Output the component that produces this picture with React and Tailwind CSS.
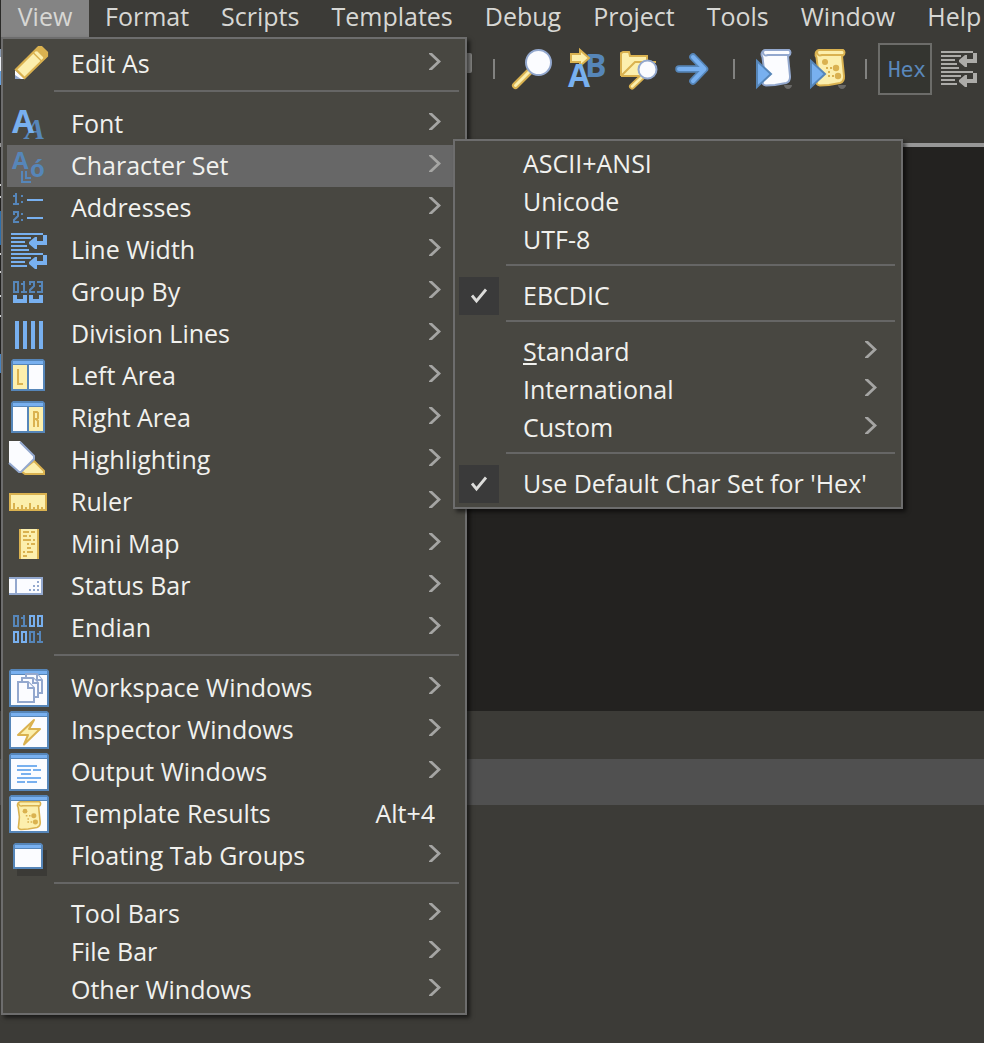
import React from "react";

const BRIGHT = "#78b0ef";
const DEEP = "#5686b9";
const CREAM = "#fcefad";
const GOLD = "#dab250";
const STEEL = "#93a8ce";
const PAPER = "#fbfcff";

const DIGITS = {
  0: "M1 1h4v10h-4z",
  1: "M0 3h3 M3 0v11 M0 11h6",
  2: "M1 4V1h4v4l-4 4v2h5",
  3: "M0 1h5v4h-3 M5 5v6h-5",
};

function Digits({ text, x, y, color }) {
  return text.split("").map((d, i) => (
    <path
      key={i}
      d={DIGITS[d]}
      transform={`translate(${x + i * 8} ${y})`}
      fill="none"
      stroke={color}
      strokeWidth="2"
    />
  ));
}

function Icon({ children }) {
  return (
    <svg width="44" height="42" viewBox="0 0 44 42" className="overflow-visible" aria-hidden="true">
      {children}
    </svg>
  );
}

function Letter({ x, y, size, fill, className = "", children }) {
  return (
    <text x={x} y={y} fontSize={size} fill={fill} fontWeight="700" className={className || "font-['Open_Sans',sans-serif]"}>
      {children}
    </text>
  );
}

function PencilIcon() {
  return (
    <Icon>
      <path d="M8 27v9h10z" fill={PAPER} />
      <path d="M8 32v4h6z" fill={STEEL} />
      <path d="M9 26.500 31.500 4h3l5.500 5.500v3.500L17.500 35z" fill={CREAM} stroke={GOLD} strokeWidth="2.200" />
      <path d="M31.500 4h3l5.500 5.500v3.500l-3 2.500-9-8.500z" fill={GOLD} />
      <path d="m29.500 9 6 6" stroke={CREAM} strokeWidth="2" />
      <path d="m26 9.500 8.500 8.500" stroke={GOLD} strokeWidth="1.500" />
    </Icon>
  );
}

function FontIcon() {
  return (
    <Icon>
      <Letter x={18} y={36} size={30} fill={DEEP} className="font-['Liberation_Serif',serif] italic">A</Letter>
      <Letter x={5} y={30} size={32} fill={BRIGHT}>A</Letter>
    </Icon>
  );
}

function CharSetIcon() {
  return (
    <Icon>
      <Letter x={5} y={24} size={24} fill={DEEP}>A</Letter>
      <Letter x={23} y={32} size={24} fill={DEEP}>ó</Letter>
      <path d="M15 26v11h9M19 26v7h5" fill="none" stroke={DEEP} strokeWidth="2" />
    </Icon>
  );
}

function AddressesIcon() {
  return (
    <Icon>
      <Digits text="1" x={6} y={6} color={DEEP} />
      <Digits text="2" x={6} y={24} color={DEEP} />
      <path d="M14 8h2v2h-2zM14 14h2v2h-2zM14 26h2v2h-2zM14 32h2v2h-2z" fill={DEEP} />
      <path d="M20 12h16v2H20zM20 30h16v2H20z" fill={BRIGHT} />
    </Icon>
  );
}

function WrapShape({ color }) {
  return (
    <g fill={color}>
      <path d="M4 4h32v2H4zM4 8h20v2H4zM4 12h14v2H4zM4 16h16v2H4zM4 20h18v2H4zM4 24h32v2H4zM4 28h20v2H4zM4 32h14v2H4zM4 36h16v2H4z" />
      <path d="M36 6h4v10H30v4h-2l-6-5v-2l6-5h2v4h6zM36 26h4v10H30v4h-2l-6-5v-2l6-5h2v4h6z" />
    </g>
  );
}

function LineWidthIcon() {
  return (
    <Icon>
      <WrapShape color={BRIGHT} />
    </Icon>
  );
}

function GroupByIcon() {
  return (
    <Icon>
      <Digits text="0123" x={6} y={10} color={DEEP} />
      <path d="M6 24h4v4h6v-4h4v8H6zM22 24h4v4h6v-4h4v8H22z" fill={BRIGHT} />
    </Icon>
  );
}

function DivisionIcon() {
  return (
    <Icon>
      <path d="M8 8h4v28H8zM16 8h4v28h-4zM24 8h4v28h-4zM32 8h4v28h-4z" fill={BRIGHT} />
    </Icon>
  );
}

function AreaIcon({ side }) {
  const left = side === "left";
  return (
    <Icon>
      <path d="M4 6l2-2h30l2 2v30H4z" fill={DEEP} />
      <path d="M6 6h30v3H6z" fill={BRIGHT} />
      <path d="M6 10h14v24H6z" fill={left ? CREAM : PAPER} />
      <path d="M22 10h14v24H22z" fill={left ? PAPER : CREAM} />
      <path
        d={left ? "M11 14v15h5" : "M27 30V15h3l1 1v5l-1 1h-3M29 22l2 2v6"}
        fill="none"
        stroke={GOLD}
        strokeWidth="2"
      />
    </Icon>
  );
}

function HighlightIcon() {
  return (
    <Icon>
      <path d="M27 22 37 32v3H18l-4-3z" fill={CREAM} stroke={GOLD} strokeWidth="2" />
      <path d="M2 2h11l14 15v3L14 33h-2L2 24z" fill={PAPER} />
      <path d="M13 3l14 14v3L14 33h-2L2 24" fill="none" stroke={STEEL} strokeWidth="2" />
    </Icon>
  );
}

function RulerIcon() {
  return (
    <Icon>
      <path d="M3 13h36v16H3z" fill={CREAM} stroke={GOLD} strokeWidth="2" />
      <path
        d="M6 22h2v6H6zM10 26h2v2h-2zM14 24h2v4h-2zM18 26h2v2h-2zM22 22h2v6h-2zM26 26h2v2h-2zM30 24h2v4h-2zM34 26h2v2h-2z"
        fill={GOLD}
      />
    </Icon>
  );
}

function MiniMapIcon() {
  return (
    <Icon>
      <path d="M12 6h20v30H12z" fill={GOLD} />
      <path d="M14 6h16v30H14z" fill={CREAM} />
      <path
        d="M16 8h6v2h-6zM24 8h4v2h-4zM16 12h4v2h-4zM22 12h2v2h-2zM16 16h8v2h-8zM26 16h2v2h-2zM20 20h2v2h-2zM24 20h4v2h-4zM20 24h4v2h-4zM16 28h2v2h-2zM20 28h6v2h-6zM16 32h4v2h-4z"
        fill={GOLD}
      />
    </Icon>
  );
}

function StatusBarIcon() {
  return (
    <Icon>
      <path d="M2 12h34v18H2z" fill={STEEL} />
      <path d="M2 14h6v14H2zM10 14h24v14H10z" fill={PAPER} />
      <path d="M30 16h2v2h-2zM26 20h2v2h-2zM30 20h2v2h-2zM22 24h2v2h-2zM26 24h2v2h-2zM30 24h2v2h-2z" fill={STEEL} />
    </Icon>
  );
}

function EndianIcon() {
  return (
    <Icon>
      <Digits text="01" x={6} y={8} color={DEEP} />
      <Digits text="00" x={22} y={8} color={BRIGHT} />
      <Digits text="00" x={6} y={24} color={BRIGHT} />
      <Digits text="01" x={22} y={24} color={DEEP} />
    </Icon>
  );
}

function WindowIcon({ children }) {
  return (
    <Icon>
      <path d="M2 4l2-2h36l2 2v36H2z" fill={DEEP} />
      <path d="M4 4h36v3H4z" fill={BRIGHT} />
      <path d="M4 8h36v30H4z" fill={PAPER} />
      {children}
    </Icon>
  );
}

function WorkspaceIcon() {
  return (
    <WindowIcon>
      <g fill={PAPER} stroke={STEEL} strokeWidth="2">
        <path d="M19 7h11l5 6v13H19z" />
        <path d="M30 7v6h5" />
        <path d="M15 11h11l5 5v14H15z" />
        <path d="M26 11v5h5" />
        <path d="M11 15h10l6 6v14H11z" />
        <path d="M21 15v6h6" />
      </g>
    </WindowIcon>
  );
}

function InspectorIcon() {
  return (
    <WindowIcon>
      <path d="M27 11 22 20H33L17 35.500 21 26H11z" fill={CREAM} stroke={GOLD} strokeWidth="2" strokeLinejoin="round" />
    </WindowIcon>
  );
}

function OutputIcon() {
  return (
    <WindowIcon>
      <path
        d="M10 14h20v2H10zM10 18h14v2H10zM26 18h8v2h-8zM14 22h10v2H14zM10 26h24v2H10zM10 30h8v2h-8zM20 30h10v2H20z"
        fill={BRIGHT}
      />
    </WindowIcon>
  );
}

function Scroll({ fill, stroke, spots }) {
  return (
    <g>
      <path
        d="M4 1H28c2 1 2 4 0 5.500l-1 .5 2 20c.3 4-1 6-4 7l-11 2-9 .5c-3-.5-4-2-3-5l1-11-1.500-12C0 6 0 2 4 1z"
        fill={fill}
        stroke={stroke}
        strokeWidth="2"
        strokeLinejoin="round"
      />
      <path d="M2 3c0 3 2 4 5 3H28" fill="none" stroke={stroke} strokeWidth="2" />
      {spots && (
        <g fill={stroke}>
          <circle cx="10" cy="13" r="3" />
          <circle cx="21" cy="19" r="3.200" />
          <circle cx="23" cy="27" r="3.200" />
          <path d="M11 18h2v2h-2zM15 18h2v2h-2zM13 22h2v2h-2zM13 26h2v2h-2zM17 26h2v2h-2z" />
        </g>
      )}
    </g>
  );
}

function TemplateIcon() {
  return (
    <WindowIcon>
      <g transform="translate(10 8) scale(.8 .78)">
        <Scroll fill={CREAM} stroke={GOLD} spots />
      </g>
    </WindowIcon>
  );
}

function FloatingIcon() {
  return (
    <Icon>
      <path d="M10 15h30v26H10z" fill="#3b3a36" />
      <path d="M6 10l2-2h26l2 2v24H6z" fill={DEEP} />
      <path d="M8 10h26v3H8z" fill={BRIGHT} />
      <path d="M8 14h26v18H8z" fill={PAPER} />
    </Icon>
  );
}

function Chevron() {
  return (
    <svg width="12" height="18" viewBox="0 0 12 18" className="mr-5 mb-1 shrink-0" aria-hidden="true">
      <path d="M0 0h3l9 8.500-9 8.500H0v-1l8-7.500L0 1z" fill="#a5a5a3" />
    </svg>
  );
}

function Separator() {
  return <li role="separator" className="mt-[5px] mr-0.5 mb-[11px] ml-[47px] h-0.5 bg-[#666665]" />;
}

function MenuItem({ icon, label, shortcut, leaf, compact, active, children }) {
  return (
    <li role="none" className="relative">
      <button
        type="button"
        role="menuitem"
        aria-haspopup={leaf ? undefined : "menu"}
        className={`flex w-full items-center text-left ${compact ? "h-[38px]" : "h-[42px]"} ${active ? "bg-[#676767]" : ""}`}
      >
        <span className="w-16 shrink-0">{icon}</span>
        <span className="flex-1 pb-0.5 whitespace-nowrap">{label}</span>
        {shortcut && <span className="mr-[26px] pb-0.5">{shortcut}</span>}
        {!leaf && <Chevron />}
      </button>
      {children}
    </li>
  );
}

function CheckItem({ label }) {
  return (
    <li role="none">
      <label className="flex h-[38px] items-center">
        <span className="grid h-full w-10 shrink-0 place-items-center bg-[#3a3a3a]">
          <input type="checkbox" defaultChecked className="peer col-start-1 row-start-1 size-full appearance-none" />
          <svg
            width="40"
            height="38"
            viewBox="0 0 40 38"
            className="pointer-events-none invisible col-start-1 row-start-1 peer-checked:visible"
            aria-hidden="true"
          >
            <path d="M13 18.500 17.500 24 27 12.500" fill="none" stroke="#dcdcda" strokeWidth="2.800" />
          </svg>
        </span>
        <span className="ml-6 pb-0.5 whitespace-nowrap">{label}</span>
      </label>
    </li>
  );
}

const PANEL =
  "border-2 border-[#6d6d6d] bg-[#484741] p-1 text-[#f1f1ee] shadow-[3px_3px_4px_rgba(0,0,0,0.55)]";

function CharacterSetMenu() {
  return (
    <ul role="menu" aria-label="Character Set" className={`absolute -top-1.5 left-full z-10 -ml-2 w-[450px] ${PANEL}`}>
      <MenuItem compact leaf label="ASCII+ANSI" />
      <MenuItem compact leaf label="Unicode" />
      <MenuItem compact leaf label="UTF-8" />
      <Separator />
      <CheckItem label="EBCDIC" />
      <Separator />
      <MenuItem
        compact
        label={
          <>
            <span className="underline decoration-2 underline-offset-2">S</span>tandard
          </>
        }
      />
      <MenuItem compact label="International" />
      <MenuItem compact label="Custom" />
      <Separator />
      <CheckItem label="Use Default Char Set for 'Hex'" />
    </ul>
  );
}

function ViewMenu() {
  return (
    <ul role="menu" aria-label="View" className={`absolute top-full left-0 z-10 w-[466px] ${PANEL}`}>
      <MenuItem icon={<PencilIcon />} label="Edit As" />
      <Separator />
      <MenuItem icon={<FontIcon />} label="Font" />
      <MenuItem icon={<CharSetIcon />} label="Character Set" active>
        <CharacterSetMenu />
      </MenuItem>
      <MenuItem icon={<AddressesIcon />} label="Addresses" />
      <MenuItem icon={<LineWidthIcon />} label="Line Width" />
      <MenuItem icon={<GroupByIcon />} label="Group By" />
      <MenuItem icon={<DivisionIcon />} label="Division Lines" />
      <MenuItem icon={<AreaIcon side="left" />} label="Left Area" />
      <MenuItem icon={<AreaIcon side="right" />} label="Right Area" />
      <MenuItem icon={<HighlightIcon />} label="Highlighting" />
      <MenuItem icon={<RulerIcon />} label="Ruler" />
      <MenuItem icon={<MiniMapIcon />} label="Mini Map" />
      <MenuItem icon={<StatusBarIcon />} label="Status Bar" />
      <MenuItem icon={<EndianIcon />} label="Endian" />
      <Separator />
      <MenuItem icon={<WorkspaceIcon />} label="Workspace Windows" />
      <MenuItem icon={<InspectorIcon />} label="Inspector Windows" />
      <MenuItem icon={<OutputIcon />} label="Output Windows" />
      <MenuItem icon={<TemplateIcon />} label="Template Results" shortcut="Alt+4" leaf />
      <MenuItem icon={<FloatingIcon />} label="Floating Tab Groups" />
      <Separator />
      <MenuItem compact label="Tool Bars" />
      <MenuItem compact label="File Bar" />
      <MenuItem compact label="Other Windows" />
    </ul>
  );
}

const MENUS = ["Format", "Scripts", "Templates", "Debug", "Project", "Tools", "Window", "Help"];

function MenuBar() {
  return (
    <nav aria-label="Main menu" className="relative flex h-[37px] pl-px text-[#d7d7d4]">
      <div className="relative">
        <button type="button" aria-haspopup="menu" aria-expanded="true" className="h-full w-[88px] bg-[#848484] pb-2">
          View
        </button>
        <ViewMenu />
      </div>
      <div className="flex min-w-0 flex-1 overflow-hidden">
        {MENUS.map((name) => (
          <button key={name} type="button" aria-haspopup="menu" className="h-full shrink-0 px-4 pb-2">
            {name}
          </button>
        ))}
      </div>
    </nav>
  );
}

function Tool({ label, children }) {
  return (
    <button type="button" aria-label={label} className="shrink-0">
      <svg width="54" height="52" viewBox="0 0 54 52" aria-hidden="true">
        {children}
      </svg>
    </button>
  );
}

function Divider() {
  return (
    <div className="flex w-6 shrink-0 justify-center">
      <div className="h-5 w-0.5 bg-[#828280]" />
    </div>
  );
}

function RunBadge() {
  return (
    <>
      <path d="M38 42h8c0 2-2 4-4 4s-4-2-4-4z" fill="#6a6967" />
      <path d="M11 18 25 31 11 44z" fill={BRIGHT} stroke={DEEP} strokeWidth="2" />
    </>
  );
}

function ToolBar() {
  return (
    <div role="toolbar" aria-label="Tools" className="flex h-[106px] items-start overflow-hidden pt-1.5">
      <div className="flex h-[52px] items-center pl-[459px]">
        <div className="mr-2.5 mb-3 h-5 w-[13px] shrink-0 rounded-xs bg-[#8b8b89]" />
        <Divider />
        <Tool label="Find">
          <path d="M24 28 9.500 42.500" stroke={GOLD} strokeWidth="7" strokeLinecap="round" />
          <path d="M24 28 9.500 42.500" stroke={CREAM} strokeWidth="3" strokeLinecap="round" />
          <circle cx="32.500" cy="19.500" r="12.500" fill={PAPER} stroke={STEEL} strokeWidth="2" />
        </Tool>
        <Tool label="Replace">
          <Letter x={25} y={34} size={32} fill={DEEP}>B</Letter>
          <path d="M11 11h9V7l9 8-9 8v-4h-9z" fill={CREAM} stroke={GOLD} strokeWidth="2" />
          <Letter x={8} y={44} size={32} fill={BRIGHT}>A</Letter>
        </Tool>
        <Tool label="Find in Files">
          <path d="M7 33V10l2-1h6l1 3h18v7h8L29 33z" fill={CREAM} />
          <path d="M7 33V10l2-1h6l1 4h17v6M7 33 21 19h21M7 33h18" fill="none" stroke={GOLD} strokeWidth="2" />
          <path d="M28 34 18 43.500" stroke={GOLD} strokeWidth="6" strokeLinecap="round" />
          <path d="M28 34 18 43.500" stroke={CREAM} strokeWidth="2.500" strokeLinecap="round" />
          <circle cx="33.500" cy="26.500" r="9" fill={PAPER} stroke={STEEL} strokeWidth="2" />
        </Tool>
        <Tool label="Goto">
          <g fill="none" strokeLinecap="round" strokeLinejoin="round">
            <path d="M11 26h22M25 14l11.500 12L25 38" stroke={DEEP} strokeWidth="7.500" />
            <path d="M11 26h22M25 14l11.500 12L25 38" stroke={BRIGHT} strokeWidth="4" />
          </g>
        </Tool>
        <Divider />
        <Tool label="Run Script">
          <g transform="translate(15 6)">
            <Scroll fill={PAPER} stroke={STEEL} />
          </g>
          <RunBadge />
        </Tool>
        <Tool label="Run Template">
          <g transform="translate(15 6)">
            <Scroll fill={CREAM} stroke={GOLD} spots />
          </g>
          <RunBadge />
        </Tool>
        <Divider />
        <button
          type="button"
          className="h-[52px] w-[54px] shrink-0 border-2 border-[#6c6c69] bg-[#343530] pt-0.5 pl-1 font-['DejaVu_Sans_Mono',monospace] text-[21px] text-[#5a88bb]"
        >
          Hex
        </button>
        <Tool label="Line Wrap">
          <g transform="translate(5 4)">
            <WrapShape color="#acaba8" />
          </g>
        </Tool>
      </div>
    </div>
  );
}

const EDGE = [
  [49, "#2a2a28"],
  [8, "#8fa0b8"],
  [14, "#f2f5fa"],
  [14, "#6aa5e4"],
  [58, "#2a2a28"],
  [4, "#999999"],
  [37, "#232220"],
  [2, "#d8d8d8"],
  [10, "#232220"],
  [2, "#d8d8d8"],
  [13, "#232220"],
  [34, "#2f72b0"],
  [8, "#232220"],
  [2, "#d8d8d8"],
  [16, "#232220"],
  [2, "#d8d8d8"],
  [22, "#232220"],
  [2, "#d8d8d8"],
  [18, "#232220"],
  [2, "#d8d8d8"],
  [37, "#232220"],
  [19, "#4a87c4"],
];

export default function App() {
  return (
    <div className="relative flex min-h-screen flex-col overflow-hidden bg-[#3c3b37] font-['Open_Sans',sans-serif] text-[25px] leading-8">
      <MenuBar />
      <ToolBar />
      <div className="h-1 bg-[#979797]" />
      <main className="flex-1 bg-[#232220]" />
      <div className="h-12" />
      <div className="h-[46px] bg-[#505050]" />
      <div className="h-[238px]" />
      <div className="absolute top-0 left-0 w-px" aria-hidden="true">
        {EDGE.map(([height, color], i) => (
          <div key={i} style={{ height, background: color }} />
        ))}
      </div>
    </div>
  );
}
